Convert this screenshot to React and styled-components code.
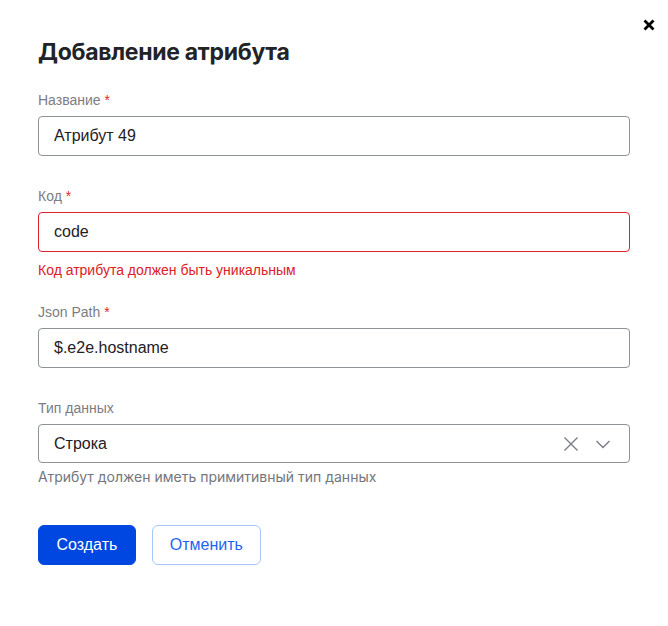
import React from 'react';
import styled, { createGlobalStyle } from 'styled-components';

const GlobalStyle = createGlobalStyle`
  body {
    margin: 0;
    background: #fff;
    font-family: "Liberation Sans", Arial, sans-serif;
  }
`;

const Modal = styled.div`
  position: relative;
  width: 668px;
  height: 626px;
  box-sizing: border-box;
  padding: 36px 38px 0 38px;
  background: #fff;
`;

const CloseButton = styled.button`
  position: absolute;
  top: 18px;
  right: 12px;
  width: 14px;
  height: 14px;
  padding: 0;
  border: none;
  background: none;
  cursor: pointer;
  display: flex;
  align-items: center;
  justify-content: center;
`;

const Title = styled.h1`
  margin: 0 0 22px 0;
  font-family: Inter, "Noto Sans", sans-serif;
  font-size: 23px;
  line-height: 32px;
  font-weight: 700;
  color: #222327;
  letter-spacing: -0.3px;
`;

const Field = styled.div`
  display: flex;
  flex-direction: column;
  margin-bottom: ${p => p.$gap}px;
`;

const Label = styled.label`
  font-family: "Liberation Sans", Arial, sans-serif;
  font-size: 14px;
  line-height: 20px;
  color: #7c7d83;
  margin-bottom: 6px;
`;

const Required = styled.span`
  color: #e5262b;
`;

const InputBox = styled.div`
  display: flex;
  align-items: center;
  height: ${p => p.$height || 40}px;
  box-sizing: border-box;
  padding: 0 0 0 15px;
  border: 1px solid ${p => (p.$error ? '#d9232b' : '#8f9299')};
  border-radius: 4px;
  font-size: 16px;
  color: #1f2024;
`;

const Value = styled.span`
  flex: 1;
`;

const Message = styled.div`
  margin-top: ${p => p.$top}px;
  font-family: ${p => (p.$error ? '"Liberation Sans", Arial, sans-serif' : 'Inter, "Noto Sans", sans-serif')};
  font-size: 14px;
  line-height: 20px;
  color: ${p => (p.$error ? '#dc2026' : '#75767c')};
`;

const IconSlot = styled.span`
  display: flex;
  align-items: center;
  justify-content: center;
  width: 32px;
  height: 100%;
  color: #7b7d84;
`;

const Actions = styled.div`
  display: flex;
  gap: 16px;
`;

const Button = styled.button`
  height: 40px;
  box-sizing: border-box;
  padding: 0 ${p => (p.$primary ? 17.5 : 17)}px;
  border-radius: 6px;
  font-family: "Liberation Sans", Arial, sans-serif;
  font-size: 16px;
  cursor: pointer;
  border: 1px solid ${p => (p.$primary ? '#0047e1' : '#a9c6fb')};
  background: ${p => (p.$primary ? '#0047e1' : '#fff')};
  color: ${p => (p.$primary ? '#fff' : '#1b64f2')};
`;

function App() {
  return (
    <>
      <GlobalStyle />
      <Modal>
        <CloseButton aria-label="close">
          <svg width="12" height="12" viewBox="0 0 12 12">
            <path d="M1.5 1.5 L10.5 10.5 M10.5 1.5 L1.5 10.5" stroke="#000" strokeWidth="2.8" strokeLinecap="butt" />
          </svg>
        </CloseButton>
        <Title>Добавление атрибута</Title>

        <Field $gap={30}>
          <Label>Название <Required>*</Required></Label>
          <InputBox><Value>Атрибут 49</Value></InputBox>
        </Field>

        <Field $gap={22}>
          <Label>Код <Required>*</Required></Label>
          <InputBox $error><Value>code</Value></InputBox>
          <Message $error $top={8}>Код атрибута должен быть уникальным</Message>
        </Field>

        <Field $gap={30}>
          <Label>Json Path <Required>*</Required></Label>
          <InputBox><Value>$.e2e.hostname</Value></InputBox>
        </Field>

        <Field $gap={38}>
          <Label>Тип данных</Label>
          <InputBox $height={39}>
            <Value>Строка</Value>
            <IconSlot>
              <svg width="16" height="16" viewBox="0 0 16 16">
                <path d="M1.5 1.5 L14.5 14.5 M14.5 1.5 L1.5 14.5" stroke="currentColor" strokeWidth="1.4" fill="none" />
              </svg>
            </IconSlot>
            <IconSlot>
              <svg width="16" height="10" viewBox="0 0 16 10">
                <path d="M1.5 2 L8 8.5 L14.5 2" stroke="currentColor" strokeWidth="1.4" fill="none" />
              </svg>
            </IconSlot>
            <span style={{ width: 10 }} />
          </InputBox>
          <Message $top={4}>Атрибут должен иметь примитивный тип данных</Message>
        </Field>

        <Actions>
          <Button $primary>Создать</Button>
          <Button>Отменить</Button>
        </Actions>
      </Modal>
    </>
  );
}

export default App;
